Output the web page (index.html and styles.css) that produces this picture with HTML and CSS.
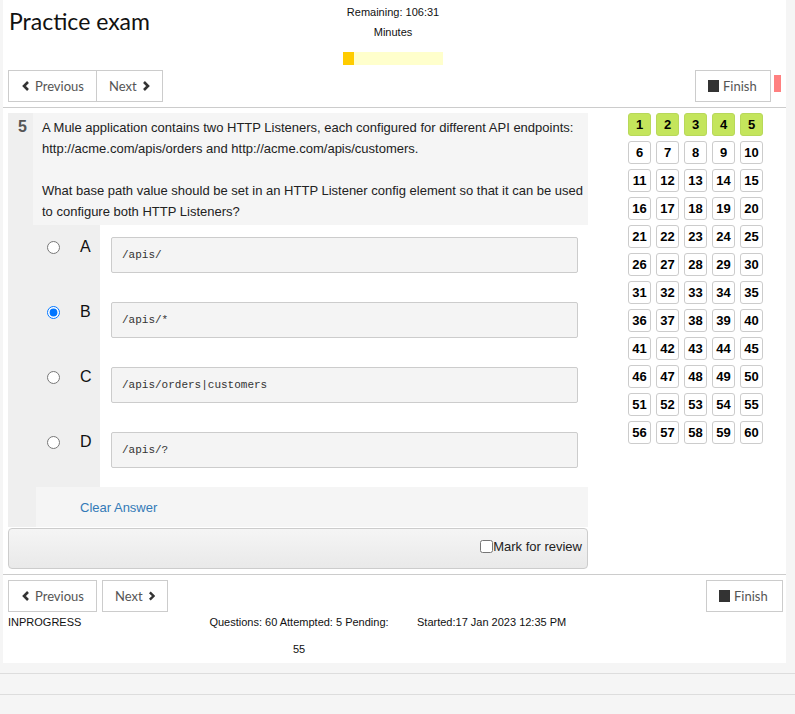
FILE: index.html
```html
<!DOCTYPE html>
<html>
<head>
<meta charset="utf-8">
<link rel="stylesheet" href="styles.css">
</head>
<body>
<div class="page">
  <header class="top">
    <h1 class="title">Practice exam</h1>
    <div class="timer">
      <div class="timer-line">Remaining: 106:31</div>
      <div class="timer-line">Minutes</div>
      <div class="tbar"><div class="tbar-fill" style="width:11px"></div></div>
    </div>
    <div></div>
  </header>

  <div class="nav">
    <div class="btn-group">
      <button class="btn btn-prev"><svg class="chev" viewBox="0 0 8 10"><polyline points="6,1 2,5 6,9"/></svg>Previous</button>
      <button class="btn">Next<svg class="chev" viewBox="0 0 8 10"><polyline points="2,1 6,5 2,9"/></svg></button>
    </div>
    <div class="nav-right">
      <button class="btn btn-finish"><span class="stop"></span>Finish</button>
      <span class="flag"></span>
    </div>
  </div>
  <div class="rule"></div>

  <main class="main">
    <section class="qwrap">
      <div class="qblock">
        <div class="qrow">
          <div class="qnum">5</div>
          <div class="qtext">A Mule application contains two HTTP Listeners, each configured for different API endpoints: http://acme.com/apis/orders and http://acme.com/apis/customers.<br><br>What base path value should be set in an HTTP Listener config element so that it can be used to configure both HTTP Listeners?</div>
        </div>
        <div class="answers">
          <div class="ans">
            <div class="ans-left"><input type="radio" name="a" class="radio"><span class="letter">A</span></div>
            <div class="ans-right"><div class="code">/apis/</div></div>
          </div>
          <div class="ans">
            <div class="ans-left"><input type="radio" name="a" class="radio" checked><span class="letter">B</span></div>
            <div class="ans-right"><div class="code">/apis/*</div></div>
          </div>
          <div class="ans">
            <div class="ans-left"><input type="radio" name="a" class="radio"><span class="letter">C</span></div>
            <div class="ans-right"><div class="code">/apis/orders|customers</div></div>
          </div>
          <div class="ans">
            <div class="ans-left"><input type="radio" name="a" class="radio"><span class="letter">D</span></div>
            <div class="ans-right"><div class="code">/apis/?</div></div>
          </div>
        </div>
        <div class="clear-row">
          <div></div>
          <div class="clear-cell"><a class="clear-link">Clear Answer</a></div>
        </div>
      </div>
      <div class="review"><label class="review-label"><input type="checkbox" class="check">Mark for review</label></div>
    </section>

    <aside class="grid-col">
      <div class="qgrid">
        <span class="qb done">1</span><span class="qb done">2</span><span class="qb done">3</span><span class="qb done">4</span><span class="qb done">5</span>
        <span class="qb">6</span><span class="qb">7</span><span class="qb">8</span><span class="qb">9</span><span class="qb">10</span>
        <span class="qb">11</span><span class="qb">12</span><span class="qb">13</span><span class="qb">14</span><span class="qb">15</span>
        <span class="qb">16</span><span class="qb">17</span><span class="qb">18</span><span class="qb">19</span><span class="qb">20</span>
        <span class="qb">21</span><span class="qb">22</span><span class="qb">23</span><span class="qb">24</span><span class="qb">25</span>
        <span class="qb">26</span><span class="qb">27</span><span class="qb">28</span><span class="qb">29</span><span class="qb">30</span>
        <span class="qb">31</span><span class="qb">32</span><span class="qb">33</span><span class="qb">34</span><span class="qb">35</span>
        <span class="qb">36</span><span class="qb">37</span><span class="qb">38</span><span class="qb">39</span><span class="qb">40</span>
        <span class="qb">41</span><span class="qb">42</span><span class="qb">43</span><span class="qb">44</span><span class="qb">45</span>
        <span class="qb">46</span><span class="qb">47</span><span class="qb">48</span><span class="qb">49</span><span class="qb">50</span>
        <span class="qb">51</span><span class="qb">52</span><span class="qb">53</span><span class="qb">54</span><span class="qb">55</span>
        <span class="qb">56</span><span class="qb">57</span><span class="qb">58</span><span class="qb">59</span><span class="qb">60</span>
      </div>
    </aside>
  </main>

  <div class="rule rule-bottom"></div>

  <div class="nav nav-bottom">
    <div class="btn-pair">
      <button class="btn btn-prev"><svg class="chev" viewBox="0 0 8 10"><polyline points="6,1 2,5 6,9"/></svg>Previous</button>
      <button class="btn">Next<svg class="chev" viewBox="0 0 8 10"><polyline points="2,1 6,5 2,9"/></svg></button>
    </div>
    <button class="btn btn-finish2"><span class="stop"></span>Finish</button>
  </div>

  <div class="status">
    <div class="st1">INPROGRESS</div>
    <div class="st2">Questions: 60 Attempted: 5 Pending: 55</div>
    <div class="st3">Started:17 Jan 2023 12:35 PM</div>
  </div>
</div>
<div class="foot"></div>
</body>
</html>
```
FILE: styles.css
```css
* { box-sizing: border-box; }
html, body { margin: 0; padding: 0; }
body {
  background: #f5f5f5;
  font-family: "Liberation Sans", Arial, sans-serif;
  color: #222;
}
.page {
  margin-left: 3px;
  width: 783px;
  background: #fff;
}
.top {
  display: grid;
  grid-template-columns: 1fr auto 1fr;
  padding: 0 5px;
  height: 65px;
}
.title {
  margin: 0;
  padding: 5px 0 0 1px;
  font-family: Lato, "Open Sans", sans-serif;
  font-weight: 400;
  font-size: 23px;
  line-height: 32px;
  color: #111;
}
.timer {
  width: 100px;
  margin-left: -3px;
  padding-top: 2px;
  text-align: center;
  font-size: 11px;
  color: #111;
}
.timer-line { line-height: 20px; }
.tbar {
  margin-top: 10px;
  height: 13px;
  background: #ffffcc;
}
.tbar-fill { height: 13px; background: #ffcc00; }

.nav {
  display: flex;
  justify-content: space-between;
  align-items: flex-start;
  padding: 0 5px;
  margin-top: 5px;
}
.btn {
  display: inline-flex;
  align-items: center;
  gap: 5px;
  height: 32px;
  padding: 0 12px;
  border: 1px solid #ccc;
  background: #fff;
  font-family: Lato, "Open Sans", sans-serif;
  font-size: 13px;
  color: #555;
  margin: 0;
  border-radius: 0;
}
.btn-prev { width: 89px; padding-left: 13px; }
.btn-finish { width: 76px; }
.btn-group { display: flex; }
.btn-group .btn + .btn { border-left: none; width: 66px; }
.chev {
  width: 8px;
  height: 10px;
  fill: none;
  stroke: #333;
  stroke-width: 2.6;
}
.stop {
  display: inline-block;
  width: 11px;
  height: 12px;
  background: #333;
  margin-right: -1px;
}
.nav-right { display: flex; align-items: flex-start; gap: 3px; }
.flag {
  display: block;
  width: 7px;
  height: 17px;
  margin-top: 5px;
  background: #ff8080;
}
.rule {
  margin-top: 5px;
  border-top: 1px solid #ccc;
}

.main {
  display: flex;
  padding: 5px 0 0 5px;
}
.qwrap { width: 580px; }
.qblock { background: #efefef; }
.qrow {
  display: grid;
  grid-template-columns: 25px 1fr;
}
.qnum {
  padding: 4px 0 0 10px;
  font-weight: 700;
  font-size: 16px;
  line-height: 20px;
  color: #555;
}
.qtext {
  background: #f5f5f5;
  padding: 4px 2px 3px 9px;
  font-size: 13px;
  line-height: 21px;
  color: #222;
  min-height: 112px;
}
.ans {
  display: grid;
  grid-template-columns: 92px 1fr;
}
.ans-left {
  display: flex;
  align-items: flex-start;
  padding: 12px 0 0 39px;
}
.radio {
  margin: 4px 0 0 0;
  width: 13px;
  height: 13px;
}
.letter {
  margin-left: 20px;
  margin-top: 1px;
  font-size: 16px;
  line-height: 18px;
  color: #111;
}
.ans-right {
  background: #fff;
  padding: 12px 10px 17px 11px;
}
.ans:last-child .ans-right { padding-bottom: 19px; }
.code {
  height: 36px;
  display: flex;
  align-items: center;
  padding-left: 10px;
  border: 1px solid #ccc;
  border-radius: 2px;
  background: #f4f4f4;
  font-family: "Liberation Mono", "DejaVu Sans Mono", monospace;
  font-size: 11px;
  color: #333;
}
.clear-row {
  display: grid;
  grid-template-columns: 28px 1fr;
  height: 40px;
}
.clear-cell {
  background: #f5f5f5;
  display: flex;
  align-items: center;
  padding-left: 44px;
}
.clear-link {
  color: #337ab7;
  font-size: 13px;
}
.review {
  margin-top: 1px;
  height: 41px;
  border: 1px solid #ccc;
  border-radius: 4px;
  background: linear-gradient(#f5f5f5, #e9e9e9);
  display: flex;
  justify-content: flex-end;
  align-items: center;
  padding: 0 5px 5px 0;
}
.review-label {
  display: flex;
  align-items: center;
  font-size: 13px;
  color: #222;
}
.check { margin: 0; width: 13px; height: 13px; }

.grid-col { padding-left: 40px; }
.qgrid {
  display: grid;
  grid-template-columns: repeat(5, 23px);
  grid-auto-rows: 23px;
  gap: 5px;
}
.qb {
  display: flex;
  align-items: center;
  justify-content: center;
  border: 1px solid #ccc;
  border-radius: 3px;
  background: #fff;
  font-weight: 700;
  font-size: 13px;
  color: #000;
}
.qb.done { background: #c4e55c; border-color: #b8d85a; }

.rule-bottom { margin-top: 5px; }
.nav-bottom { padding: 0 3px 0 5px; }
.btn-pair { display: flex; gap: 5px; }
.btn-pair .btn + .btn { width: 66px; }
.btn-finish2 { width: 77px; }

.status {
  display: grid;
  grid-template-columns: 198px 186px 1fr;
  padding-left: 5px;
  margin-top: -3px;
  font-size: 11px;
  line-height: 27px;
  color: #111;
  height: 54px;
}
.st2 { text-align: center; }
.st3 { padding-left: 25px; }

.foot {
  margin-top: 10px;
  height: 22px;
  border-top: 1px solid #ddd;
  border-bottom: 1px solid #ddd;
}
```
